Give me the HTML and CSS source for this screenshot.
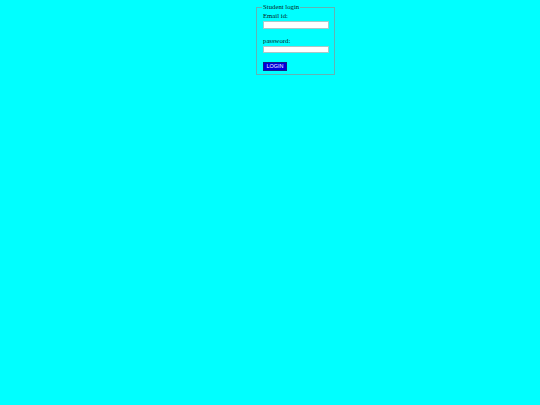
FILE: index.html
```html
<!DOCTYPE html>
<html>
<head>
<meta charset="utf-8">
<link rel="stylesheet" href="styles.css">
</head>
<body>
<form class="login">
  <fieldset class="box">
    <legend class="title">Student login</legend>
    <label class="label">Email id:</label>
    <input class="field" type="text">
    <label class="label label-pw">password:</label>
    <input class="field" type="password">
    <button class="btn" type="button">LOGIN</button>
  </fieldset>
</form>
</body>
</html>
```
FILE: styles.css
```css
html, body {
  margin: 0;
  padding: 0;
  background: #00ffff;
}
body {
  font-family: "Liberation Serif", "Times New Roman", serif;
  font-size: 6.75px;
  color: #000;
}
.login {
  margin: 0;
  padding: 3px 0 0 256px;
}
.box {
  width: 78px;
  box-sizing: border-box;
  margin: 0;
  border: 1px solid #5fb5b5;
  padding: 0 5px 3px 6px;
  display: flex;
  flex-direction: column;
  align-items: flex-start;
}
.title {
  padding: 0 1px;
  margin-left: -1px;
  line-height: 8px;
  font-size: 6.75px;
  color: #0a1a1a;
}
.label {
  display: block;
  line-height: 8px;
  margin-top: 1px;
  color: #0a1a1a;
}
.label-pw {
  margin-top: 8px;
}
.field {
  display: block;
  width: 66px;
  height: 7.6px;
  box-sizing: border-box;
  margin: 1px 0 0 0;
  padding: 0;
  border: 0.5px solid #a8c8c8;
  background: #fff;
}
.btn {
  display: block;
  margin-top: 9px;
  width: 24px;
  height: 9px;
  box-sizing: border-box;
  padding: 0;
  border: 1px solid #1a1a8a;
  background: #0000dd;
  color: #fff;
  font-family: "Liberation Sans", Arial, sans-serif;
  font-size: 5.4px;
  line-height: 7px;
}
```
